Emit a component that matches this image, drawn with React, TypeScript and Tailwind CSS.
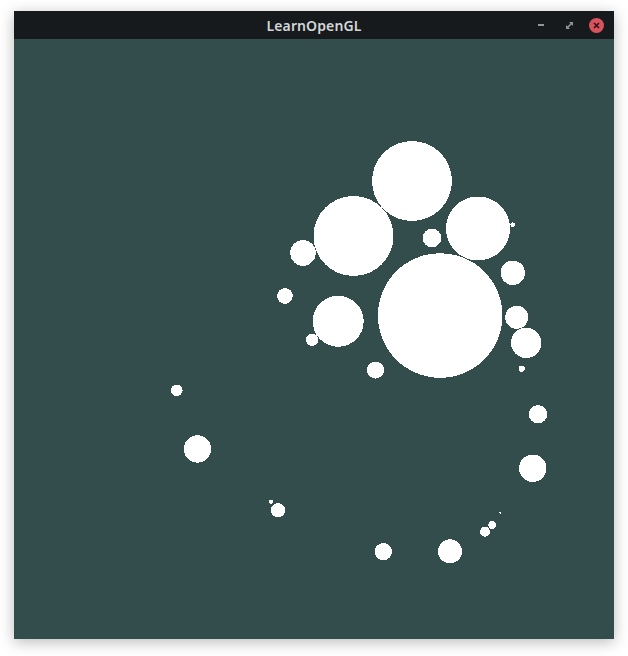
import React from "react";

const circles: [number, number, number][] = [
  [412, 181, 40],
  [353.5, 236, 40],
  [478, 228.5, 32],
  [432, 238, 9.2],
  [303, 253, 12.8],
  [512.7, 224.7, 2.3],
  [440.2, 315.5, 62.3],
  [512.8, 272.8, 12.2],
  [285, 296, 7.8],
  [338.2, 321.3, 25.5],
  [312.2, 339.7, 6.2],
  [516.7, 317.3, 11.5],
  [526.2, 342.8, 15.2],
  [521.7, 368.7, 3],
  [375.5, 370, 8.5],
  [176.8, 390.3, 5.8],
  [197.5, 449, 13.7],
  [271, 501.7, 2],
  [278, 510.3, 7.2],
  [383.3, 551.7, 8.7],
  [450, 551.3, 12],
  [485, 531.7, 5],
  [492.2, 525, 3.8],
  [500.3, 512.7, 1],
  [538, 414.3, 9.2],
  [532.7, 468.3, 13.7],
];

export default function App() {
  return (
    <div className="w-[628px] h-[656px] bg-white pt-[11px] pl-[14px]">
      <div className="w-[600px] flex flex-col shadow-[0_3px_14px_rgba(0,0,0,0.28)]">
        <div className="relative h-[28px] bg-[#161a1c] flex items-center justify-center">
          <span
            className="text-[14px] font-semibold text-[#d3d6d8] tracking-[0.1px]"
            style={{ fontFamily: '"Noto Sans", "Open Sans", sans-serif' }}
          >
            LearnOpenGL
          </span>
          <div className="absolute right-[10px] top-0 h-[28px] flex items-center">
            <div className="w-[6px] h-[2px] bg-[#8f9598] mr-[22px]" />
            <svg width="7" height="7" viewBox="0 0 7 7" className="mr-[16px]">
              <path d="M3 0 H7 V4 Z" fill="#8f9598" />
              <path d="M0 3 V7 H4 Z" fill="#8f9598" />
              <path d="M1 6 L6 1" stroke="#8f9598" strokeWidth="1.6" />
            </svg>
            <div className="w-[15px] h-[15px] rounded-full bg-[#d8535c] flex items-center justify-center">
              <svg width="7" height="7" viewBox="0 0 7 7">
                <path d="M1 1 L6 6 M6 1 L1 6" stroke="#2a1416" strokeWidth="1.6" />
              </svg>
            </div>
          </div>
        </div>
        <div className="w-[600px] h-[600px] bg-[#334d4d]">
          <svg width="600" height="600" viewBox="0 0 600 600" shapeRendering="crispEdges">
            {circles.map(([cx, cy, r], i) => (
              <circle key={i} cx={cx - 14} cy={cy - 39} r={r} fill="#ffffff" />
            ))}
          </svg>
        </div>
      </div>
    </div>
  );
}
